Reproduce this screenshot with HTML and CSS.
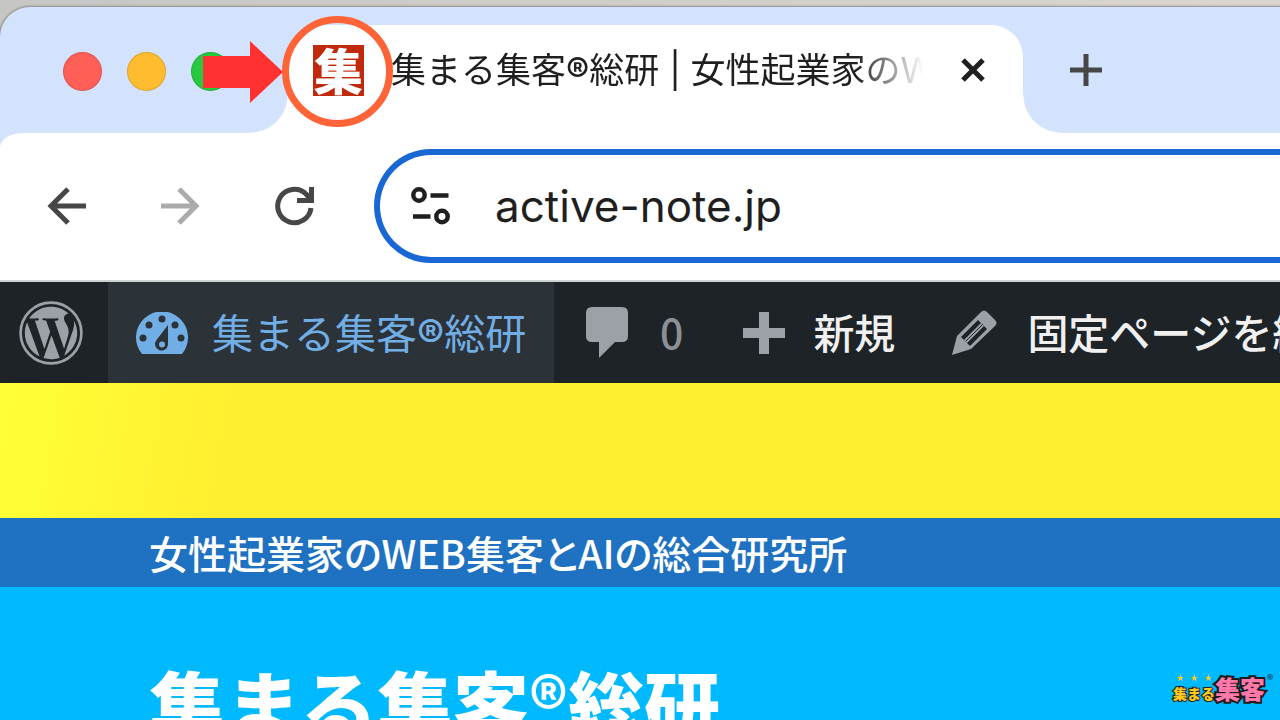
FILE: index.html
```html
<!DOCTYPE html>
<html lang="ja">
<head>
  <meta charset="UTF-8">
  <meta name="viewport" content="width=device-width, initial-scale=1.0">
  <title>集まる集客®総研</title>
  <link rel="stylesheet" href="styles.css">
</head>
<body>
  <div class="window">

    <!-- Tab strip -->
    <header class="tab-strip">
      <div class="lights">
        <span class="light red"></span>
        <span class="light yellow"></span>
        <span class="light green"></span>
      </div>
      <div class="tab">
        <div class="favicon">集
          <svg class="arrow" viewBox="0 0 80 62"><path d="M0 15H47V0L80 31L47 62V47H0Z" fill="#ff3131"/></svg>
          <span class="ring"></span>
        </div>
        <div class="tab-title">集まる集客<b>®</b>総研 | 女性起業家のW</div>
        <button class="icon-btn tab-close" aria-label="閉じる">
          <svg width="26" height="26" viewBox="0 0 26 26"><path d="M3 3L23 23M23 3L3 23" stroke="#1f1f1f" stroke-width="5" fill="none"/></svg>
        </button>
      </div>
      <button class="icon-btn new-tab" aria-label="新しいタブ">
        <svg width="32" height="32" viewBox="0 0 32 32"><path d="M16 0V32M0 16H32" stroke="#474747" stroke-width="5" fill="none"/></svg>
      </button>
    </header>

    <!-- Toolbar -->
    <div class="toolbar">
      <button class="icon-btn" aria-label="戻る">
        <svg width="40" height="40" viewBox="0 0 40 40"><path d="M39 20H4M21 3L4 20L21 37" stroke="#474747" stroke-width="5" fill="none"/></svg>
      </button>
      <button class="icon-btn" aria-label="進む" disabled>
        <svg width="40" height="40" viewBox="0 0 40 40"><path d="M0 20H35M18 3L35 20L18 37" stroke="#ababab" stroke-width="5" fill="none"/></svg>
      </button>
      <button class="icon-btn" aria-label="再読み込み">
        <svg width="40" height="40" viewBox="0 0 40 40"><path d="M36 22A16.700 16.700 0 1 1 31 8L36.500 14M36.500 1V14.500H22" stroke="#474747" stroke-width="5" fill="none"/></svg>
      </button>
      <div class="omnibox">
        <svg width="40" height="38" viewBox="0 0 40 38"><g fill="none" stroke="#1f1f1f" stroke-width="4.500"><circle cx="8" cy="8" r="5.700"/><circle cx="31" cy="29.500" r="5.700"/><path d="M19.500 8.500H37.500M2 29.500H19.500"/></g></svg>
        <input type="text" value="active-note.jp" aria-label="アドレス">
      </div>
    </div>

    <!-- WordPress admin bar -->
    <nav class="admin-bar">
      <a href="#" class="wp-logo" aria-label="WordPress">
        <svg width="64" height="64" viewBox="0 0 24 24" fill="#9ca1a7">
          <circle cx="12" cy="12" r="11.400" fill="none" stroke="#9ca1a7" stroke-width="1"/>
          <path transform="translate(1.080 1.080) scale(.91)" d="M21.469 6.825c.84 1.537 1.318 3.3 1.318 5.175 0 3.979-2.156 7.456-5.363 9.325l3.295-9.527c.615-1.54.82-2.771.82-3.864 0-.405-.026-.78-.07-1.11m-7.981.105c.647-.03 1.232-.105 1.232-.105.582-.075.514-.93-.067-.899 0 0-1.755.135-2.88.135-1.064 0-2.85-.15-2.85-.15-.585-.03-.661.855-.075.885 0 0 .54.061 1.125.09l1.68 4.605-2.37 7.08L5.354 6.9c.649-.03 1.234-.1 1.234-.1.585-.075.516-.93-.065-.896 0 0-1.746.138-2.874.138-.2 0-.438-.008-.69-.015C4.911 3.15 8.235 1.215 12 1.215c2.809 0 5.365 1.072 7.286 2.833-.046-.003-.091-.009-.141-.009-1.06 0-1.812.923-1.812 1.914 0 .89.513 1.643 1.06 2.531.411.72.89 1.643.89 2.977 0 .915-.354 1.994-.821 3.479l-1.075 3.585-3.9-11.61.001.014zM12 22.784c-1.059 0-2.081-.153-3.048-.437l3.237-9.406 3.315 9.087c.024.053.05.101.078.149-1.12.393-2.325.609-3.582.609M1.211 12c0-1.564.336-3.05.935-4.39L7.29 21.709C3.694 19.96 1.212 16.271 1.211 12"/>
        </svg>
      </a>
      <a href="#" class="site-name">
        <svg width="52" height="42" viewBox="0 0 52 42">
          <path d="M6 42A26 26 0 1 1 46 42Z" fill="#72aee6"/>
          <g fill="#2c3338"><circle cx="26" cy="7" r="3.500"/><circle cx="13" cy="13" r="3.500"/><circle cx="39" cy="13" r="3.500"/><circle cx="7" cy="26" r="3.500"/><circle cx="45" cy="26" r="3.500"/><path d="M32 13V33A6.500 6.500 0 1 1 20.500 28Z"/></g>
          <circle cx="26" cy="32.500" r="3" fill="#72aee6"/>
        </svg>
        <span>集まる集客<b>®</b>総研</span>
      </a>
      <a href="#" class="comments">
        <svg width="42" height="52" viewBox="0 0 42 52"><path d="M6 0H36Q42 0 42 6V29Q42 35 36 35H29L13 51V35H6Q0 35 0 29V6Q0 0 6 0Z" fill="#9ca1a7"/></svg>
        <span>0</span>
      </a>
      <a href="#" class="new-content">
        <svg width="42" height="42" viewBox="0 0 42 42"><path d="M16 0H26V16H42V26H26V42H16V26H0V16H16Z" fill="#9ca1a7"/></svg>
        <span>新規</span>
      </a>
      <a href="#" class="edit">
        <svg width="46" height="46" viewBox="0 0 46 46">
          <path d="M29 2Q32-1 35 2L43 10Q46 13 43 16L19 39L0 45L5 26Z" fill="#9ca1a7"/>
          <path d="M9 27L26 10L35 19L18 36Z" fill="#1d2327"/>
          <path d="M12 30L29 13L32 16L15 33Z" fill="#9ca1a7"/>
          <path d="M14 31L31 14" stroke="#1d2327" stroke-width="1"/>
        </svg>
        <span>固定ページを編</span>
      </a>
    </nav>

    <!-- Site -->
    <div class="banner"></div>
    <p class="tagline">女性起業家のWEB集客とAIの総合研究所</p>
    <main class="hero">
      <h1>集まる集客<span>®</span>総研</h1>
    </main>
  </div>

  <div class="brand">
    <span class="brand-stars"><i>★</i><i>★</i><i>★</i></span>
    <span class="brand-small">集まる</span>
    <span class="brand-big">集客</span>
    <span class="brand-mark">®</span>
  </div>
</body>
</html>
```
FILE: styles.css
```css
* {
  box-sizing: border-box;
}

body {
  margin: 0;
  height: 100vh;
  padding-top: 7px;
  overflow: hidden;
  position: relative;
  background: linear-gradient(90deg, #c6c6c4, #dad6cd);
  font-family: "Noto Sans CJK JP", sans-serif;
}

.window {
  height: 100%;
  display: flex;
  flex-direction: column;
  border-radius: 30px 0 0 0;
  overflow: hidden;
  background: #d3e3fd;
  box-shadow: 0 0 2px 1px #8c8c8c;
}

.window > * {
  flex-shrink: 0;
}

svg {
  display: block;
  flex-shrink: 0;
}

.icon-btn {
  display: block;
  padding: 0;
  border: none;
  background: none;
  cursor: pointer;
}

/* tab strip */
.tab-strip {
  height: 126px;
  padding: 18px 0 0 63px;
  display: flex;
}

.lights {
  display: flex;
  gap: 25px;
  padding-top: 27px;
}

.light {
  width: 39px;
  height: 39px;
  border-radius: 50%;
  border: 1px solid rgba(0, 0, 0, 0.12);
}

.red { background: #ff5f57; }
.yellow { background: #febc2e; }
.green { background: #28c840; }

.tab {
  position: relative;
  flex: 0 1 735px;
  min-width: 0;
  margin-left: 58px;
  padding: 0 37px 18px 25px;
  display: flex;
  align-items: center;
  background: #fff;
  border-radius: 32px 32px 0 0;
}

/* curved feet of the tab */
.tab::before,
.tab::after {
  content: "";
  position: absolute;
  bottom: 0;
  width: 38px;
  height: 38px;
}

.tab::before {
  right: 100%;
  background: radial-gradient(circle at 0 0, transparent 37px, #fff 38px);
}

.tab::after {
  left: 100%;
  background: radial-gradient(circle at 100% 0, transparent 37px, #fff 38px);
}

.favicon {
  position: relative;
  flex: none;
  width: 51px;
  height: 51px;
  background: #c1290c;
  color: #fff;
  font-size: 49px;
  font-weight: 900;
  line-height: 48px;
  text-align: center;
}

.arrow {
  position: absolute;
  z-index: 2;
  top: -4px;
  right: 81px;
  width: 80px;
  height: 62px;
}

.ring {
  position: absolute;
  z-index: 2;
  top: -29px;
  left: -31px;
  width: 111px;
  height: 111px;
  border: 7px solid #ff6338;
  border-radius: 50%;
}

.tab-title {
  flex: 1;
  min-width: 0;
  margin: 0 36px 0 27px;
  overflow: hidden;
  white-space: nowrap;
  color: #1f1f1f;
  font-family: Inter, "Noto Sans CJK JP", sans-serif;
  font-size: 35px;
  line-height: 50px;
  -webkit-mask-image: linear-gradient(90deg, #000 465px, transparent 532px);
  mask-image: linear-gradient(90deg, #000 465px, transparent 532px);
}

.new-tab {
  align-self: flex-start;
  margin: 29px 0 0 47px;
}

/* toolbar */
.toolbar {
  display: flex;
  align-items: center;
  gap: 74px;
  height: 149px;
  padding: 0 0 2px 47px;
  background: #fff;
  border-bottom: 2px solid #cfd2d2;
  border-radius: 24px 0 0 0 / 14px 0 0 0;
}

.omnibox {
  flex: 1;
  display: flex;
  align-items: center;
  gap: 44px;
  height: 114px;
  margin-left: -15px;
  padding-left: 31px;
  border: 6px solid #1967d2;
  border-right: none;
  border-radius: 57px 0 0 57px;
}

.omnibox input {
  flex: 1;
  min-width: 0;
  padding: 0;
  border: none;
  outline: none;
  background: none;
  color: #1f1f1f;
  font-family: Inter, sans-serif;
  font-size: 44px;
}

/* admin bar */
.admin-bar {
  display: flex;
  height: 101px;
  background: #1d2327;
  overflow: hidden;
}

.admin-bar a {
  display: flex;
  align-items: center;
  flex: none;
  color: #f0f0f1;
  font-family: Inter, "Noto Sans CJK JP", sans-serif;
  font-size: 41px;
  font-weight: 500;
  text-decoration: none;
  white-space: nowrap;
}

.admin-bar span {
  padding-bottom: 4px;
}

.admin-bar .wp-logo {
  width: 108px;
  padding-left: 19px;
}

.admin-bar .site-name {
  width: 446px;
  gap: 24px;
  padding-left: 28px;
  background: #2c3338;
  color: #72aee6;
  font-weight: 400;
}

.admin-bar .comments {
  gap: 32px;
  padding-left: 32px;
  color: #8c8f94;
  font-family: "Noto Sans CJK JP", sans-serif;
}

.admin-bar .new-content {
  gap: 28px;
  padding-left: 60px;
}

.admin-bar .edit {
  gap: 29px;
  padding-left: 57px;
}

/* site */
.banner {
  height: 135px;
  background: linear-gradient(100deg, #ffff36, #ffef30 18%);
}

.tagline {
  margin: 0;
  height: 69px;
  padding-left: 149px;
  background: #1f71c1;
  color: #fff;
  font-size: 39px;
  font-weight: 500;
  font-feature-settings: "palt";
  line-height: 69px;
}

.hero {
  flex: 1;
  min-height: 0;
  padding: 72px 0 0 149px;
  background: #00b9ff;
}

.hero h1 {
  margin: 0;
  color: #fff;
  font-size: 76px;
  font-weight: 900;
  line-height: 88px;
}

.hero h1 span {
  font-weight: 700;
}

/* corner logo */
.brand {
  position: absolute;
  right: 5px;
  bottom: 14px;
  display: grid;
  grid-template-columns: auto auto 10px;
  grid-template-rows: 10px 24px;
  font-weight: 900;
  white-space: nowrap;
}

.brand span {
  paint-order: stroke fill;
}

.brand-stars {
  display: flex;
  justify-content: space-around;
  color: #ffc81e;
  font-size: 7px;
  line-height: 10px;
}

.brand i {
  font-style: normal;
}

.brand-small {
  grid-area: 2 / 1;
  color: #ffc81e;
  font-size: 14px;
  line-height: 22px;
  -webkit-text-stroke: 2px #222;
}

.brand-big {
  grid-area: 1 / 2 / 3 / 3;
  color: #ff78aa;
  font-size: 25px;
  line-height: 32px;
  -webkit-text-stroke: 4px #1c1c1c;
}

.brand-mark {
  grid-area: 1 / 3;
  padding-left: 2px;
  color: #14506e;
  font-size: 12px;
  line-height: 14px;
}
```
